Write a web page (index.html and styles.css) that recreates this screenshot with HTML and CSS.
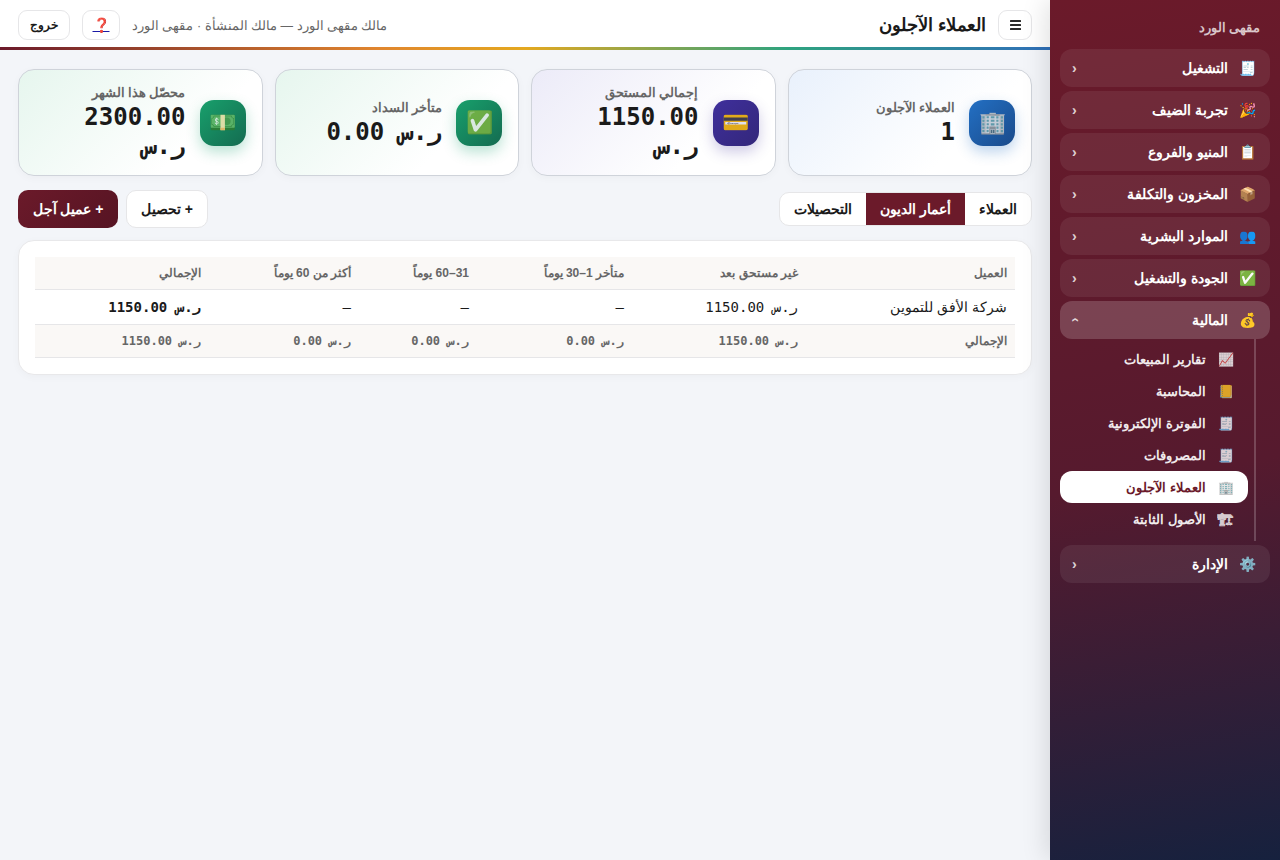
FILE: index.html
```html
<!DOCTYPE html>
<html lang="ar" dir="rtl">
<head>
<meta charset="utf-8">
<title>العملاء الآجلون</title>
<link rel="stylesheet" href="styles.css">
</head>
<body>
<div class="app">
  <aside class="sidebar">
    <div class="brand">مقهى الورد</div>
    <nav class="nav">
      <div class="group"><span class="gicon">🧾</span><span class="glabel">التشغيل</span><span class="chev">‹</span></div>
      <div class="group"><span class="gicon">🎉</span><span class="glabel">تجربة الضيف</span><span class="chev">‹</span></div>
      <div class="group"><span class="gicon">📋</span><span class="glabel">المنيو والفروع</span><span class="chev">‹</span></div>
      <div class="group"><span class="gicon">📦</span><span class="glabel">المخزون والتكلفة</span><span class="chev">‹</span></div>
      <div class="group"><span class="gicon">👥</span><span class="glabel">الموارد البشرية</span><span class="chev">‹</span></div>
      <div class="group"><span class="gicon">✅</span><span class="glabel">الجودة والتشغيل</span><span class="chev">‹</span></div>
      <div class="group open"><span class="gicon">💰</span><span class="glabel">المالية</span><span class="chev up">‹</span></div>
      <div class="sub">
        <div class="item"><span class="iicon">📈</span>تقارير المبيعات</div>
        <div class="item"><span class="iicon">📒</span>المحاسبة</div>
        <div class="item"><span class="iicon">🧾</span>الفوترة الإلكترونية</div>
        <div class="item"><span class="iicon">🧾</span>المصروفات</div>
        <div class="item active"><span class="iicon">🏢</span>العملاء الآجلون</div>
        <div class="item"><span class="iicon">🏗</span>الأصول الثابتة</div>
      </div>
      <div class="group"><span class="gicon">⚙️</span><span class="glabel">الإدارة</span><span class="chev">‹</span></div>
    </nav>
  </aside>
  <main class="main">
    <header class="topbar">
      <button class="tbtn menu" aria-label="القائمة"><svg class="bars" width="11" height="10" viewBox="0 0 11 10"><rect y="0" width="11" height="2" rx=".5"/><rect y="4" width="11" height="2" rx=".5"/><rect y="8" width="11" height="2" rx=".5"/></svg></button>
      <h1 class="title">العملاء الآجلون</h1>
      <div class="tools">
        <span class="who">مالك مقهى الورد — مالك المنشأة · مقهى الورد</span>
        <a class="tbtn help" href="#">❓</a>
        <button class="tbtn exit">خروج</button>
      </div>
    </header>
    <div class="rainbow"></div>
    <div class="content">
      <section class="cards">
        <div class="card blue"><div class="cicon"><span>🏢</span></div><div class="ctext"><div class="clabel">العملاء الآجلون</div><div class="cvalue" dir="ltr">1</div></div></div>
        <div class="card purple"><div class="cicon"><span>💳</span></div><div class="ctext"><div class="clabel">إجمالي المستحق</div><div class="cvalue" dir="ltr">1150.00 ر.س</div></div></div>
        <div class="card green"><div class="cicon"><span>✅</span></div><div class="ctext"><div class="clabel">متأخر السداد</div><div class="cvalue" dir="ltr">0.00 ر.س</div></div></div>
        <div class="card green"><div class="cicon"><span>💵</span></div><div class="ctext"><div class="clabel">محصّل هذا الشهر</div><div class="cvalue" dir="ltr">2300.00 ر.س</div></div></div>
      </section>
      <section class="bar">
        <div class="tabs"><div class="tab">العملاء</div><div class="tab on">أعمار الديون</div><div class="tab">التحصيلات</div></div>
        <div class="actions"><button class="btn">+ تحصيل</button><button class="btn primary">+ عميل آجل</button></div>
      </section>
      <section class="panel">
        <table class="aging">
          <colgroup><col class="c1"><col class="c2"><col class="c3"><col class="c4"><col class="c5"><col class="c6"></colgroup>
          <thead><tr><th>العميل</th><th>غير مستحق بعد</th><th>متأخر 1–30 يوماً</th><th>31–60 يوماً</th><th>أكثر من 60 يوماً</th><th>الإجمالي</th></tr></thead>
          <tbody><tr><td>شركة الأفق للتموين</td><td class="m" dir="ltr">1150.00 ر.س</td><td class="m" dir="ltr">—</td><td class="m" dir="ltr">—</td><td class="m" dir="ltr">—</td><td class="m b" dir="ltr">1150.00 ر.س</td></tr></tbody>
          <tfoot><tr><td>الإجمالي</td><td class="m" dir="ltr">1150.00 ر.س</td><td class="m" dir="ltr">0.00 ر.س</td><td class="m" dir="ltr">0.00 ر.س</td><td class="m" dir="ltr">0.00 ر.س</td><td class="m" dir="ltr">1150.00 ر.س</td></tr></tfoot>
        </table>
      </section>
    </div>
  </main>
</div>
</body>
</html>
```
FILE: styles.css
```css
* { box-sizing: border-box; }
html, body { margin: 0; height: 100%; }
body { font-family: "Liberation Sans", sans-serif; background: #f3f5f9; color: #1a1a1a; overflow: hidden; }
.app { display: flex; height: 860px; width: 1280px; }
.sidebar { width: 230px; flex: none; padding: 0 10px; background: linear-gradient(170deg, #6b1a2a 0%, #561a2e 55%, #16213e 100%); box-shadow: -4px 0 24px rgba(0,0,0,.12); position: relative; z-index: 2; }
.brand { height: 49px; padding: 20px 10px 0; font-size: 12.5px; line-height: 16px; font-weight: 600; color: rgba(255,255,255,.75); }
.nav { display: flex; flex-direction: column; gap: 4px; }
.group { height: 38px; border-radius: 12px; background: rgba(255,255,255,.07); display: flex; align-items: center; padding: 0 14px 0 12px; color: #fff; font-size: 13.6px; font-weight: 700; }
.group.open { background: rgba(255,255,255,.18); }
.gicon { width: 16px; font-size: 14px; text-align: center; margin-left: 12px; flex: none; }
.glabel { flex: 1; }
.chev { font-size: 14px; line-height: 1; color: rgba(255,255,255,.8); }
.chev.up { transform: rotate(-90deg); }
.sub { align-self: flex-start; margin: -4px 14px 0 0; width: 196px; border-right: 2px solid rgba(255,255,255,.2); padding: 4px 0 6px; }
.item { height: 32px; width: 188px; margin-right: 6px; border-radius: 12px; display: flex; align-items: center; padding-right: 14px; color: rgba(255,255,255,.92); font-size: 13.44px; font-weight: 600; }
.item.active { background: #fff; color: #6b1a2a; font-weight: 700; }
.iicon { width: 16px; font-size: 13px; text-align: center; margin-left: 12px; flex: none; opacity: .85; }
.main { flex: 1; min-width: 0; display: flex; flex-direction: column; }
.topbar { height: 47px; padding: 3px 18px 0; background: #fff; display: flex; align-items: center; gap: 12px; }
.tbtn { height: 30px; border: 1px solid #e6e6e8; border-radius: 9px; background: #fff; display: inline-flex; align-items: center; justify-content: center; font-family: inherit; font-size: 12px; font-weight: 700; color: #1a1a1a; padding: 0; }
.menu { width: 34px; }
.bars { fill: #2a2a2a; display: block; }
.help { width: 38px; font-size: 14px; color: #1a1aa6; }
.exit { width: 52px; }
.title { margin: 0; font-size: 18px; font-weight: 700; }
.tools { margin-right: auto; display: flex; align-items: center; gap: 12px; }
.who { font-size: 12.5px; color: #666; }
.rainbow { height: 3px; background: linear-gradient(90deg, #6b1a2a 0%, #e0852e 36%, #e4a81f 50%, #2ea37f 75%, #2f6fb8 100%); }
.content { padding: 19px 18px; display: flex; flex-direction: column; }
.cards { display: grid; grid-template-columns: repeat(4, 1fr); gap: 12px; }
.card { height: 107px; border: 1px solid #cfd3da; border-radius: 16px; display: flex; align-items: center; gap: 14px; padding: 0 16px; background: #fff; box-shadow: 0 2px 8px rgba(0,0,0,.03); }
.card.blue { background: linear-gradient(135deg, #e9f1fc 0%, #fff 70%); }
.card.purple { background: linear-gradient(135deg, #ecebf8 0%, #fff 70%); }
.card.green { background: linear-gradient(135deg, #e6f6ee 0%, #fff 70%); }
.cicon { width: 46px; height: 46px; border-radius: 14px; display: flex; align-items: center; justify-content: center; font-size: 22px; flex: none; }
.cicon span { opacity: .85; }
.blue .cicon { background: linear-gradient(135deg, #2370c4, #1a4a8a); box-shadow: 0 6px 14px rgba(35,112,196,.3); }
.purple .cicon { background: linear-gradient(135deg, #3f2f9c, #33277a); box-shadow: 0 6px 14px rgba(63,47,156,.25); }
.green .cicon { background: linear-gradient(135deg, #18a06c, #146b50); box-shadow: 0 6px 14px rgba(24,160,108,.3); }
.clabel { font-size: 12.5px; font-weight: 600; color: #666; line-height: 19px; }
.cvalue { font-family: "DejaVu Sans Mono", monospace; font-size: 24px; font-weight: 700; line-height: 29px; color: #1a1a1a; text-align: right; }
.bar { display: flex; justify-content: space-between; align-items: center; margin-top: 14px; height: 38px; }
.tabs { display: flex; height: 34px; background: #fff; border: 1px solid #e6e6e8; border-radius: 10px; overflow: hidden; }
.tab { padding: 0 14px; display: flex; align-items: center; font-size: 14.4px; font-weight: 700; color: #1a1a1a; }
.tab.on { background: #6b1a2a; color: #fff; }
.actions { display: flex; gap: 8px; }
.btn { height: 38px; padding: 0; border: 1px solid #e6e6e8; border-radius: 10px; background: #fff; font-family: inherit; font-size: 14px; font-weight: 700; color: #1a1a1a; white-space: nowrap; width: 82px; }
.btn.primary { background: linear-gradient(135deg, #6b1a2a, #561423); color: #fff; border: 0; width: 100px; }
.panel { margin-top: 12px; background: #fff; border: 1px solid #e8e8ea; border-radius: 16px; padding: 16px; box-shadow: 0 2px 8px rgba(0,0,0,.03); }
.aging { width: 100%; border-collapse: collapse; table-layout: fixed; }
.c1 { width: 209px; } .c2 { width: 174px; } .c3 { width: 155px; } .c4 { width: 118px; } .c5 { width: 150px; } .c6 { width: 174px; }
.aging th { height: 32px; background: #faf8f6; border-bottom: 1px solid #e6e6e8; font-size: 12px; font-weight: 600; color: #666; text-align: right; padding: 0 8px; }
.aging td { text-align: right; padding: 0 8px; border-bottom: 1px solid #e6e6e8; font-size: 13.6px; color: #1a1a1a; }
.aging tbody td { height: 35px; }
.aging tfoot td { height: 33px; background: #faf8f6; font-size: 12px; font-weight: 600; color: #666; }
.aging .m { font-family: "DejaVu Sans Mono", monospace; }
.aging tbody .m { font-size: 14px; }
.aging .b { font-weight: 700; }
```
